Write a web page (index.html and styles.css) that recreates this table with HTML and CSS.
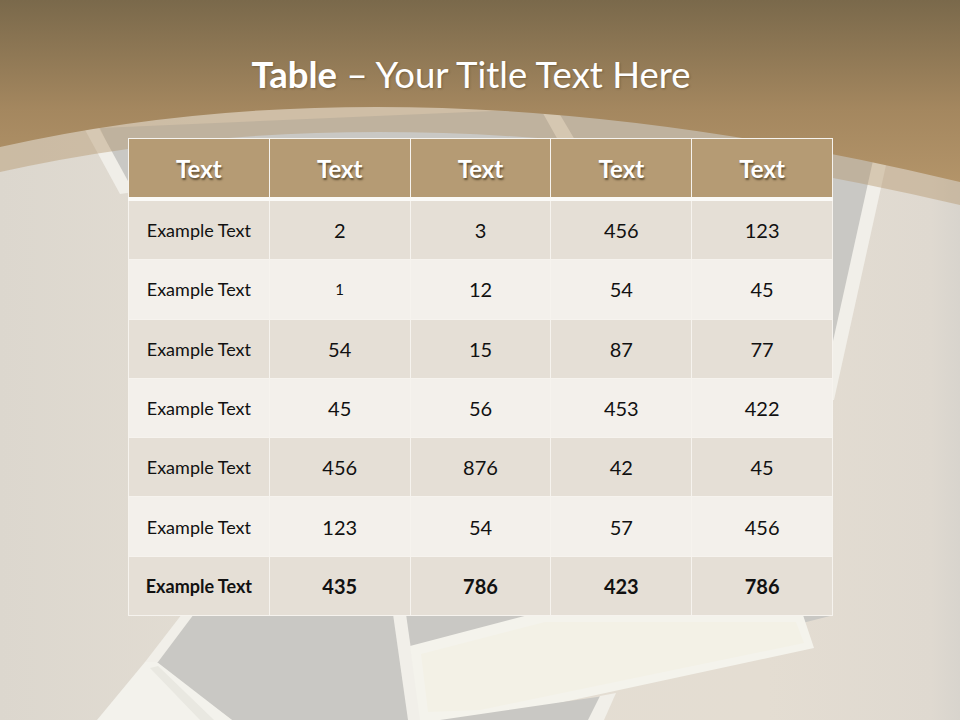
FILE: index.html
```html
<!DOCTYPE html>
<html>
<head>
<meta charset="utf-8">
<link rel="stylesheet" href="styles.css">
</head>
<body>
<div class="slide">
  <svg class="backdrop" width="960" height="720" viewBox="0 0 960 720" aria-hidden="true">
    <defs>
      <linearGradient id="brown" x1="0" y1="0" x2="0" y2="1">
        <stop offset="0" stop-color="#7a694b"/>
        <stop offset="0.6" stop-color="#a4875f"/>
        <stop offset="1" stop-color="#b39469"/>
      </linearGradient>
      <linearGradient id="beige" x1="0" y1="0" x2="1" y2="0">
        <stop offset="0" stop-color="#dcd7ce"/>
        <stop offset="0.25" stop-color="#e3ddd3"/>
        <stop offset="0.8" stop-color="#e4ddd2"/>
        <stop offset="0.97" stop-color="#dfd9d0"/>
        <stop offset="1" stop-color="#d8d4cd"/>
      </linearGradient>
    </defs>
    <rect width="960" height="720" fill="url(#beige)"/>
    <!-- gray photo area -->
    <polygon fill="#c9c8c4" points="100,128 560,108 882,155 830,400 830,616 420,720 232,720 152,662 190,610 132,200"/>
    <!-- white frame strips -->
    <polygon fill="#f0eee8" points="84,128 99,128 134,192 120,194"/>
    <polygon fill="#eeece6" points="540,108 556,108 575,140 558,140"/>
    <polygon fill="#f1efe9" points="874,156 888,156 834,400 820,400"/>
    <polygon fill="#f1efe9" points="182,614 194,614 158,662 145,662"/>
    <polygon fill="#f3f2ec" points="145,662 157,662 232,720 97,720"/>
    <polygon fill="#e9e8e1" points="150,668 158,666 214,720 200,720"/>
    <polygon fill="#f1efe9" points="393,614 406,614 421,720 408,720"/>
    <!-- cream paper -->
    <polygon fill="#f4f3ec" points="410,646 540,612 802,612 814,648 480,720 420,720"/>
    <polygon fill="#f3f1e6" points="421,654 545,622 796,622 804,643 480,710 428,712"/>
    <polygon fill="#c9c8c4" points="440,720 604,696 592,720"/>
    <polygon fill="#f1efe9" points="600,696 616,693 604,720 588,720"/>
    <!-- brown header & translucent band -->
    <path d="M0,172 Q 420,78 960,205 L960,0 L0,0 Z" fill="#b39469" fill-opacity="0.42"/>
    <path d="M0,147 Q 420,52 960,182 L960,0 L0,0 Z" fill="url(#brown)"/>
  </svg>

  <h1 class="title"><b>Table</b> – Your Title Text Here</h1>

  <table class="data">
    <thead>
      <tr><th>Text</th><th>Text</th><th>Text</th><th>Text</th><th>Text</th></tr>
    </thead>
    <tbody>
      <tr><td class="label">Example Text</td><td>2</td><td>3</td><td>456</td><td>123</td></tr>
      <tr><td class="label">Example Text</td><td class="small">1</td><td>12</td><td>54</td><td>45</td></tr>
      <tr><td class="label">Example Text</td><td>54</td><td>15</td><td>87</td><td>77</td></tr>
      <tr><td class="label">Example Text</td><td>45</td><td>56</td><td>453</td><td>422</td></tr>
      <tr><td class="label">Example Text</td><td>456</td><td>876</td><td>42</td><td>45</td></tr>
      <tr><td class="label">Example Text</td><td>123</td><td>54</td><td>57</td><td>456</td></tr>
      <tr class="total"><td class="label">Example Text</td><td>435</td><td>786</td><td>423</td><td>786</td></tr>
    </tbody>
  </table>
</div>
</body>
</html>
```

FILE: styles.css
```css
html, body {
  margin: 0;
  padding: 0;
}

body {
  font-family: Lato, "Open Sans", sans-serif;
}

.slide {
  position: relative;
  width: 960px;
  height: 720px;
  overflow: hidden;
  display: flex;
  flex-direction: column;
  align-items: flex-start;
}

.backdrop {
  position: absolute;
  left: 0;
  top: 0;
}

.title {
  position: relative;
  margin: 0;
  padding: 52px 0 0;
  width: 942px;
  height: 138px;
  box-sizing: border-box;
  text-align: center;
  font-weight: 400;
  font-size: 36.5px;
  line-height: 44px;
  color: #ffffff;
  text-shadow: 1px 1px 2px rgba(60, 45, 20, 0.35);
}

.title b {
  font-weight: 700;
}

.data {
  position: relative;
  margin: 0 0 0 128px;
  width: 705px;
  table-layout: fixed;
  border-collapse: collapse;
  border: 1px solid #f6f3ee;
}

.data th,
.data td {
  border: 1px solid #f6f3ee;
  text-align: center;
  padding: 0;
  color: #111;
}

.data th {
  height: 58px;
  background: #b59b74;
  color: #fff;
  font-weight: 700;
  font-size: 24px;
  text-shadow: 1px 2px 2px rgba(40, 30, 10, 0.6);
  border-bottom: 4px solid #fbfaf7;
}

.data td {
  height: 58.3px;
  font-size: 20px;
  line-height: 1;
}

.data tbody tr:nth-child(odd) td {
  background: #e5dfd6;
}

.data tbody tr:nth-child(even) td {
  background: #f3f0eb;
}

.data td.label {
  font-size: 18px;
}

.data td.small {
  font-size: 15px;
}

.data tr.total td {
  font-weight: 700;
}
```
